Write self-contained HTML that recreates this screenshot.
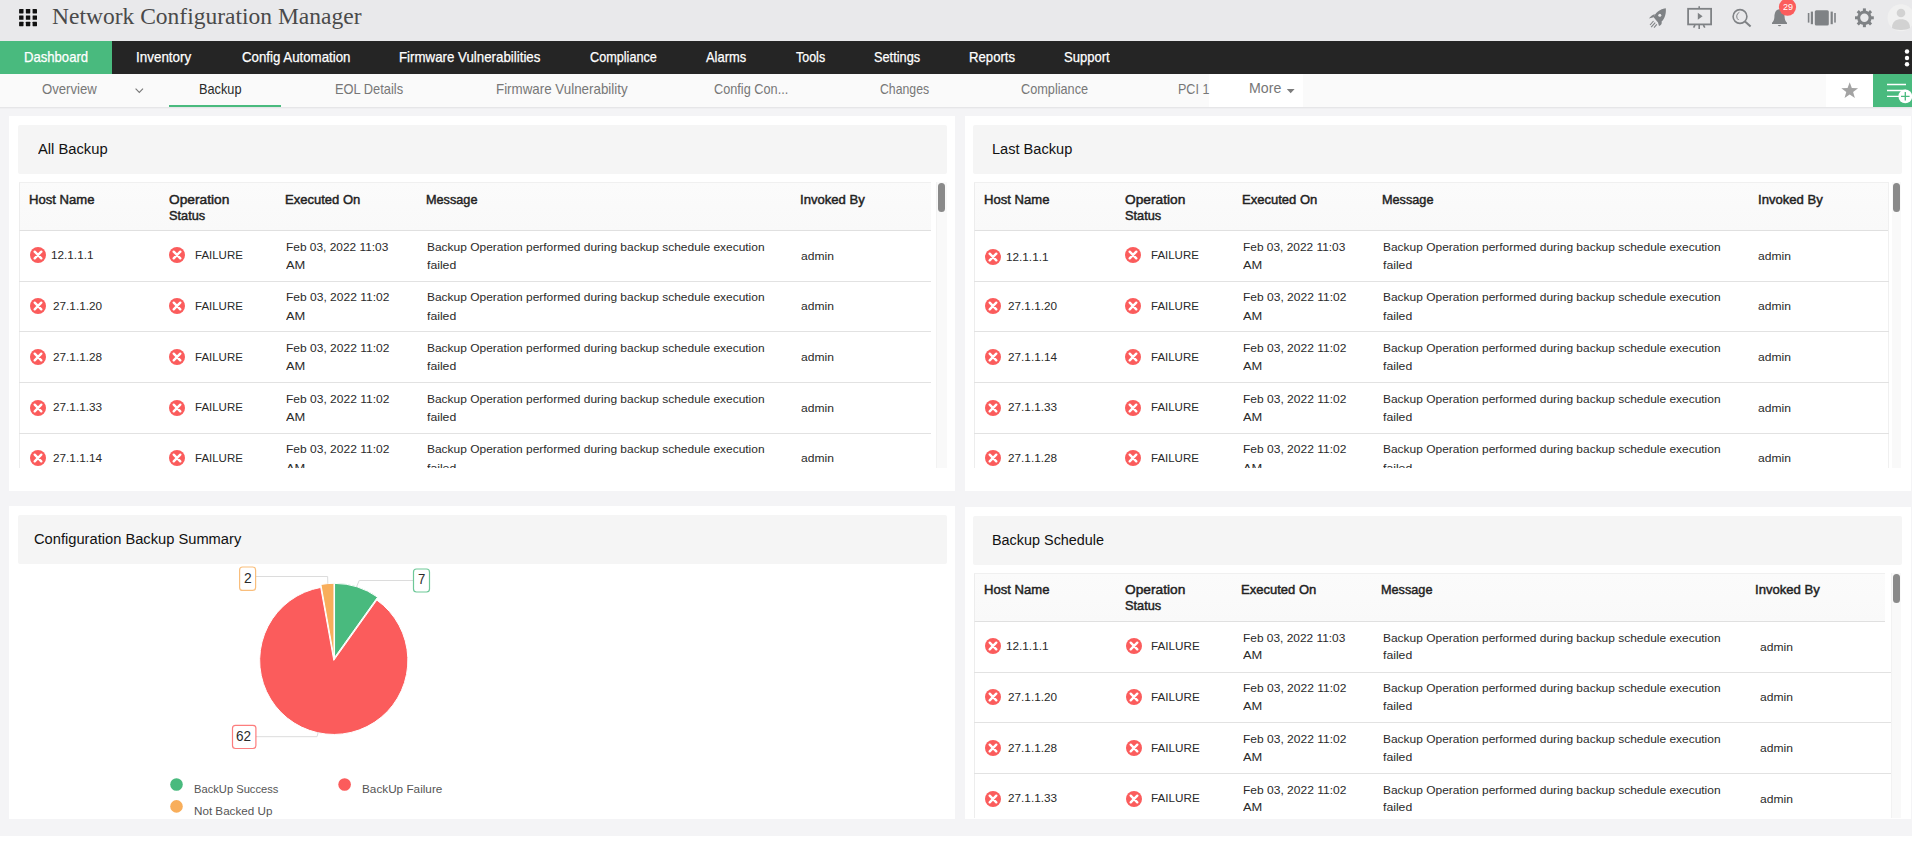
<!DOCTYPE html>
<html><head><meta charset="utf-8"><title>Network Configuration Manager</title>
<style>html,body{margin:0;padding:0;background:#fff;overflow:hidden}body{width:1914px;height:843px;position:relative;font-family:"Liberation Sans",sans-serif}#page{position:absolute;left:0;top:0;width:1912px;height:836px;overflow:hidden}span{display:block}</style></head><body><div id="page">
<div style="position:absolute;left:0px;top:0px;width:1912px;height:41px;background:#e9e9eb;"></div>
<svg style="position:absolute;left:0;top:0" width="60" height="41"><rect x="19.1" y="9.1" width="4.4" height="4.4" rx="0.4" fill="#111"/><rect x="25.85" y="9.1" width="4.4" height="4.4" rx="0.4" fill="#111"/><rect x="32.6" y="9.1" width="4.4" height="4.4" rx="0.4" fill="#111"/><rect x="19.1" y="15.45" width="4.4" height="4.4" rx="0.4" fill="#111"/><rect x="25.85" y="15.45" width="4.4" height="4.4" rx="0.4" fill="#111"/><rect x="32.6" y="15.45" width="4.4" height="4.4" rx="0.4" fill="#111"/><rect x="19.1" y="21.8" width="4.4" height="4.4" rx="0.4" fill="#111"/><rect x="25.85" y="21.8" width="4.4" height="4.4" rx="0.4" fill="#111"/><rect x="32.6" y="21.8" width="4.4" height="4.4" rx="0.4" fill="#111"/></svg>
<div style="position:absolute;left:0px;top:41px;width:1912px;height:32.6px;background:#252525;"></div>
<div style="position:absolute;left:0px;top:41px;width:112px;height:32.6px;background:#49ba7e;"></div>
<svg style="position:absolute;left:1900px;top:45px" width="12" height="26"><circle cx="7" cy="6.5" r="2.2" fill="#fff"/><circle cx="7" cy="13" r="2.2" fill="#fff"/><circle cx="7" cy="19.2" r="2.2" fill="#fff"/></svg>
<div style="position:absolute;left:0px;top:73.6px;width:1912px;height:33.4px;background:#fafafa;"></div>
<div style="position:absolute;left:0px;top:107px;width:1912px;height:1px;background:#e6e6e8;"></div>
<div style="position:absolute;left:0px;top:108px;width:1912px;height:1px;background:#efeff1;"></div>
<div style="position:absolute;left:1209px;top:73.6px;width:94px;height:33.4px;background:#fff;"></div>
<div style="position:absolute;left:1826px;top:73.6px;width:47px;height:33.4px;background:#fff;"></div>
<div style="position:absolute;left:1873px;top:73.6px;width:39px;height:33.4px;background:#49ba7e;"></div>
<div style="position:absolute;left:169.3px;top:105px;width:111.6px;height:2px;background:#49ba7e;"></div>
<svg style="position:absolute;left:130px;top:84px" width="20" height="14"><path d="M5.6 4.6 L9.3 8.4 L13 4.6" fill="none" stroke="#777" stroke-width="1.1"/></svg>
<svg style="position:absolute;left:1284px;top:84px" width="16" height="12"><path d="M2.8 4.9 L10.6 4.9 L6.7 9.2Z" fill="#7c7c7c"/></svg>
<svg style="position:absolute;left:1826px;top:74px" width="47" height="33"><polygon points="23.70,8.20 25.82,14.09 32.07,14.28 27.12,18.11 28.87,24.12 23.70,20.60 18.53,24.12 20.28,18.11 15.33,14.28 21.58,14.09" fill="#a3a3a3"/></svg>
<svg style="position:absolute;left:1873px;top:74px" width="39" height="33"><g stroke="#fff" stroke-width="1.3"><path d="M14 10.5H33M14 16.5H33M14 22.4H33"/></g><circle cx="32.3" cy="22.3" r="6.9" fill="#fff"/><path d="M28 22.3H36.6M32.3 18V26.6" stroke="#49ba7e" stroke-width="1.3"/></svg>
<svg style="position:absolute;left:1640px;top:0" width="272" height="41"><g fill="#7f8285"><path d="M25.8 8.2 C19.5 9.6 15.2 13.5 13.6 17.2 L8.9 18.6 C10.5 16 13 14.3 15.8 14.2 C18.5 11 22 8.8 25.8 8.2Z"/><path d="M25.8 8.2 C26.3 13.5 24.8 18.5 21.6 21.6 C22.2 23.6 21.2 25.4 19 26 L18 22.5 L13.6 17.2 C15.6 12.6 20 9 25.8 8.2Z"/></g><circle cx="19.8" cy="15.2" r="1.5" fill="#e9e9eb"/><g stroke="#7f8285" stroke-width="1.1"><path d="M13.5 21L10 25M15.2 22.6L11.2 27.2M16.8 24.4L14 27.6"/></g><rect x="48.1" y="8.8" width="23" height="15.6" fill="none" stroke="#7f8285" stroke-width="1.8"/><path d="M57.8 12.8 L62.6 16.3 L57.8 19.8Z" fill="#7f8285"/><path d="M59.2 6.2V8.8M59.2 25V29M53.6 27.6L55 25M64.8 27.6L63.4 25" stroke="#7f8285" stroke-width="1.6"/><circle cx="100" cy="16.5" r="6.9" fill="none" stroke="#7f8285" stroke-width="1.6"/><path d="M99.4 12.3 A4.4 4.4 0 0 0 98.6 20" fill="none" stroke="#7f8285" stroke-width="1"/><path d="M105 21.5L110.6 26.6" stroke="#7f8285" stroke-width="2"/><path d="M139.5 9.2 C135.5 9.6 134.6 13 134.4 17 C134.2 20 133.4 21.6 132 22.8 L132 24 L147 24 L147 22.8 C145.6 21.6 144.8 20 144.6 17 C144.4 13 143.5 9.6 139.5 9.2Z" fill="#7f8285"/><path d="M137.8 25 A1.8 1.8 0 0 0 141.2 25Z" fill="#7f8285"/><circle cx="147.5" cy="7.1" r="8.6" fill="#fb5c5c"/><rect x="174.8" y="10.2" width="14" height="15.4" rx="1.5" fill="#7f8285"/><rect x="170.8" y="11.6" width="2.2" height="12.6" fill="#7f8285"/><rect x="167.8" y="13" width="1.6" height="9.6" fill="#7f8285"/><rect x="190.6" y="11.6" width="2.2" height="12.6" fill="#7f8285"/><rect x="194.2" y="13" width="1.6" height="9.6" fill="#7f8285"/><rect x="222.9" y="8.4" width="3" height="4" fill="#7f8285" transform="rotate(0 224.4 17.8)"/><rect x="222.9" y="8.4" width="3" height="4" fill="#7f8285" transform="rotate(45 224.4 17.8)"/><rect x="222.9" y="8.4" width="3" height="4" fill="#7f8285" transform="rotate(90 224.4 17.8)"/><rect x="222.9" y="8.4" width="3" height="4" fill="#7f8285" transform="rotate(135 224.4 17.8)"/><rect x="222.9" y="8.4" width="3" height="4" fill="#7f8285" transform="rotate(180 224.4 17.8)"/><rect x="222.9" y="8.4" width="3" height="4" fill="#7f8285" transform="rotate(225 224.4 17.8)"/><rect x="222.9" y="8.4" width="3" height="4" fill="#7f8285" transform="rotate(270 224.4 17.8)"/><rect x="222.9" y="8.4" width="3" height="4" fill="#7f8285" transform="rotate(315 224.4 17.8)"/><circle cx="224.4" cy="17.8" r="5.7" fill="none" stroke="#7f8285" stroke-width="3"/><circle cx="261" cy="17.7" r="13.5" fill="#f0f0f0"/><circle cx="261" cy="13" r="4.3" fill="#d2d2d2"/><path d="M252 28 C252 21.5 256 19.2 261 19.2 C266 19.2 270 21.5 270 28 C267 30.6 255 30.6 252 28Z" fill="#d2d2d2"/></svg>
<div style="position:absolute;left:0px;top:109px;width:1912px;height:727px;background:#f4f4f6;"></div>
<div style="position:absolute;left:9px;top:116px;width:946px;height:375px;background:#fff;"></div>
<div style="position:absolute;left:18.2px;top:125.3px;width:928.6px;height:48.3px;background:#f5f5f5;border-radius:2px;"></div>
<div style="position:absolute;left:19.2px;top:182.2px;width:911.8px;height:48.8px;background:#fafafa;border-top:1px solid #f0f0f0;border-left:1px solid #ededed;box-sizing:border-box;border-bottom:1px solid #e0e0e0;background:linear-gradient(#fbfbfb,#f9f9f9);"></div>
<div style="position:absolute;left:19.2px;top:231px;width:1px;height:237px;background:#ededed;"></div>
<div style="position:absolute;left:19.2px;top:281px;width:911.8px;height:1px;background:#e2e2e2;"></div>
<svg style="position:absolute;left:28.6px;top:246.45px" width="18" height="18"><circle cx="9" cy="9" r="8" fill="#fb5c5c"/><path d="M5.7 5.7L12.3 12.3M12.3 5.7L5.7 12.3" stroke="#fff" stroke-width="2.4" stroke-linecap="round"/></svg>
<svg style="position:absolute;left:168px;top:246.45px" width="18" height="18"><circle cx="9" cy="9" r="8" fill="#fb5c5c"/><path d="M5.7 5.7L12.3 12.3M12.3 5.7L5.7 12.3" stroke="#fff" stroke-width="2.4" stroke-linecap="round"/></svg>
<div style="position:absolute;left:19.2px;top:331px;width:911.8px;height:1px;background:#e2e2e2;"></div>
<svg style="position:absolute;left:28.6px;top:297.17px" width="18" height="18"><circle cx="9" cy="9" r="8" fill="#fb5c5c"/><path d="M5.7 5.7L12.3 12.3M12.3 5.7L5.7 12.3" stroke="#fff" stroke-width="2.4" stroke-linecap="round"/></svg>
<svg style="position:absolute;left:168px;top:297.17px" width="18" height="18"><circle cx="9" cy="9" r="8" fill="#fb5c5c"/><path d="M5.7 5.7L12.3 12.3M12.3 5.7L5.7 12.3" stroke="#fff" stroke-width="2.4" stroke-linecap="round"/></svg>
<div style="position:absolute;left:19.2px;top:382px;width:911.8px;height:1px;background:#e2e2e2;"></div>
<svg style="position:absolute;left:28.6px;top:347.89px" width="18" height="18"><circle cx="9" cy="9" r="8" fill="#fb5c5c"/><path d="M5.7 5.7L12.3 12.3M12.3 5.7L5.7 12.3" stroke="#fff" stroke-width="2.4" stroke-linecap="round"/></svg>
<svg style="position:absolute;left:168px;top:347.89px" width="18" height="18"><circle cx="9" cy="9" r="8" fill="#fb5c5c"/><path d="M5.7 5.7L12.3 12.3M12.3 5.7L5.7 12.3" stroke="#fff" stroke-width="2.4" stroke-linecap="round"/></svg>
<div style="position:absolute;left:19.2px;top:433px;width:911.8px;height:1px;background:#e2e2e2;"></div>
<svg style="position:absolute;left:28.6px;top:398.61px" width="18" height="18"><circle cx="9" cy="9" r="8" fill="#fb5c5c"/><path d="M5.7 5.7L12.3 12.3M12.3 5.7L5.7 12.3" stroke="#fff" stroke-width="2.4" stroke-linecap="round"/></svg>
<svg style="position:absolute;left:168px;top:398.61px" width="18" height="18"><circle cx="9" cy="9" r="8" fill="#fb5c5c"/><path d="M5.7 5.7L12.3 12.3M12.3 5.7L5.7 12.3" stroke="#fff" stroke-width="2.4" stroke-linecap="round"/></svg>
<svg style="position:absolute;left:28.6px;top:449.33px" width="18" height="18"><circle cx="9" cy="9" r="8" fill="#fb5c5c"/><path d="M5.7 5.7L12.3 12.3M12.3 5.7L5.7 12.3" stroke="#fff" stroke-width="2.4" stroke-linecap="round"/></svg>
<svg style="position:absolute;left:168px;top:449.33px" width="18" height="18"><circle cx="9" cy="9" r="8" fill="#fb5c5c"/><path d="M5.7 5.7L12.3 12.3M12.3 5.7L5.7 12.3" stroke="#fff" stroke-width="2.4" stroke-linecap="round"/></svg>
<div style="position:absolute;left:936px;top:182px;width:10.5px;height:286px;background:#f9f9f9;border-left:1px solid #f2f2f2;box-sizing:border-box;"></div>
<div style="position:absolute;left:938px;top:182.7px;width:7.2px;height:29px;background:#8a8a8a;border-radius:4px;"></div>
<div style="position:absolute;left:964.5px;top:116px;width:946.5px;height:375px;background:#fff;"></div>
<div style="position:absolute;left:973.2px;top:125.3px;width:928.6px;height:48.3px;background:#f5f5f5;border-radius:2px;"></div>
<div style="position:absolute;left:974.2px;top:182.2px;width:914.6px;height:48.8px;background:#fafafa;border-top:1px solid #f0f0f0;border-left:1px solid #ededed;box-sizing:border-box;border-bottom:1px solid #e0e0e0;background:linear-gradient(#fbfbfb,#f9f9f9);"></div>
<div style="position:absolute;left:974.2px;top:231px;width:1px;height:237px;background:#ededed;"></div>
<div style="position:absolute;left:1887.8px;top:182.2px;width:1px;height:285.8px;background:#f0f0f0;"></div>
<div style="position:absolute;left:974.2px;top:281px;width:914.6px;height:1px;background:#e2e2e2;"></div>
<svg style="position:absolute;left:983.7px;top:248.05px" width="18" height="18"><circle cx="9" cy="9" r="8" fill="#fb5c5c"/><path d="M5.7 5.7L12.3 12.3M12.3 5.7L5.7 12.3" stroke="#fff" stroke-width="2.4" stroke-linecap="round"/></svg>
<svg style="position:absolute;left:1124px;top:246.45px" width="18" height="18"><circle cx="9" cy="9" r="8" fill="#fb5c5c"/><path d="M5.7 5.7L12.3 12.3M12.3 5.7L5.7 12.3" stroke="#fff" stroke-width="2.4" stroke-linecap="round"/></svg>
<div style="position:absolute;left:974.2px;top:331px;width:914.6px;height:1px;background:#e2e2e2;"></div>
<svg style="position:absolute;left:983.7px;top:297.17px" width="18" height="18"><circle cx="9" cy="9" r="8" fill="#fb5c5c"/><path d="M5.7 5.7L12.3 12.3M12.3 5.7L5.7 12.3" stroke="#fff" stroke-width="2.4" stroke-linecap="round"/></svg>
<svg style="position:absolute;left:1124px;top:297.17px" width="18" height="18"><circle cx="9" cy="9" r="8" fill="#fb5c5c"/><path d="M5.7 5.7L12.3 12.3M12.3 5.7L5.7 12.3" stroke="#fff" stroke-width="2.4" stroke-linecap="round"/></svg>
<div style="position:absolute;left:974.2px;top:382px;width:914.6px;height:1px;background:#e2e2e2;"></div>
<svg style="position:absolute;left:983.7px;top:347.89px" width="18" height="18"><circle cx="9" cy="9" r="8" fill="#fb5c5c"/><path d="M5.7 5.7L12.3 12.3M12.3 5.7L5.7 12.3" stroke="#fff" stroke-width="2.4" stroke-linecap="round"/></svg>
<svg style="position:absolute;left:1124px;top:347.89px" width="18" height="18"><circle cx="9" cy="9" r="8" fill="#fb5c5c"/><path d="M5.7 5.7L12.3 12.3M12.3 5.7L5.7 12.3" stroke="#fff" stroke-width="2.4" stroke-linecap="round"/></svg>
<div style="position:absolute;left:974.2px;top:433px;width:914.6px;height:1px;background:#e2e2e2;"></div>
<svg style="position:absolute;left:983.7px;top:398.61px" width="18" height="18"><circle cx="9" cy="9" r="8" fill="#fb5c5c"/><path d="M5.7 5.7L12.3 12.3M12.3 5.7L5.7 12.3" stroke="#fff" stroke-width="2.4" stroke-linecap="round"/></svg>
<svg style="position:absolute;left:1124px;top:398.61px" width="18" height="18"><circle cx="9" cy="9" r="8" fill="#fb5c5c"/><path d="M5.7 5.7L12.3 12.3M12.3 5.7L5.7 12.3" stroke="#fff" stroke-width="2.4" stroke-linecap="round"/></svg>
<svg style="position:absolute;left:983.7px;top:449.33px" width="18" height="18"><circle cx="9" cy="9" r="8" fill="#fb5c5c"/><path d="M5.7 5.7L12.3 12.3M12.3 5.7L5.7 12.3" stroke="#fff" stroke-width="2.4" stroke-linecap="round"/></svg>
<svg style="position:absolute;left:1124px;top:449.33px" width="18" height="18"><circle cx="9" cy="9" r="8" fill="#fb5c5c"/><path d="M5.7 5.7L12.3 12.3M12.3 5.7L5.7 12.3" stroke="#fff" stroke-width="2.4" stroke-linecap="round"/></svg>
<div style="position:absolute;left:1892px;top:182px;width:9.4px;height:286px;background:#f9f9f9;"></div>
<div style="position:absolute;left:1893px;top:182.7px;width:7.2px;height:29px;background:#8a8a8a;border-radius:4px;"></div>
<div style="position:absolute;left:9px;top:506px;width:946px;height:312.5px;background:#fff;"></div>
<div style="position:absolute;left:18.2px;top:515.3px;width:928.6px;height:48.3px;background:#f5f5f5;border-radius:2px;"></div>
<div style="position:absolute;left:964.5px;top:507px;width:946.5px;height:311.5px;background:#fff;"></div>
<div style="position:absolute;left:973.2px;top:516.3px;width:928.6px;height:48.3px;background:#f5f5f5;border-radius:2px;"></div>
<div style="position:absolute;left:974.2px;top:573.3px;width:911px;height:48.7px;background:#fafafa;border-top:1px solid #f0f0f0;border-left:1px solid #ededed;box-sizing:border-box;border-bottom:1px solid #e0e0e0;background:linear-gradient(#fbfbfb,#f9f9f9);"></div>
<div style="position:absolute;left:974.2px;top:622px;width:1px;height:196.4px;background:#ededed;"></div>
<div style="position:absolute;left:974.2px;top:672px;width:917px;height:1px;background:#e2e2e2;"></div>
<svg style="position:absolute;left:983.7px;top:637.45px" width="18" height="18"><circle cx="9" cy="9" r="8" fill="#fb5c5c"/><path d="M5.7 5.7L12.3 12.3M12.3 5.7L5.7 12.3" stroke="#fff" stroke-width="2.4" stroke-linecap="round"/></svg>
<svg style="position:absolute;left:1124.6px;top:637.45px" width="18" height="18"><circle cx="9" cy="9" r="8" fill="#fb5c5c"/><path d="M5.7 5.7L12.3 12.3M12.3 5.7L5.7 12.3" stroke="#fff" stroke-width="2.4" stroke-linecap="round"/></svg>
<div style="position:absolute;left:974.2px;top:722px;width:917px;height:1px;background:#e2e2e2;"></div>
<svg style="position:absolute;left:983.7px;top:688.17px" width="18" height="18"><circle cx="9" cy="9" r="8" fill="#fb5c5c"/><path d="M5.7 5.7L12.3 12.3M12.3 5.7L5.7 12.3" stroke="#fff" stroke-width="2.4" stroke-linecap="round"/></svg>
<svg style="position:absolute;left:1124.6px;top:688.17px" width="18" height="18"><circle cx="9" cy="9" r="8" fill="#fb5c5c"/><path d="M5.7 5.7L12.3 12.3M12.3 5.7L5.7 12.3" stroke="#fff" stroke-width="2.4" stroke-linecap="round"/></svg>
<div style="position:absolute;left:974.2px;top:773px;width:917px;height:1px;background:#e2e2e2;"></div>
<svg style="position:absolute;left:983.7px;top:738.89px" width="18" height="18"><circle cx="9" cy="9" r="8" fill="#fb5c5c"/><path d="M5.7 5.7L12.3 12.3M12.3 5.7L5.7 12.3" stroke="#fff" stroke-width="2.4" stroke-linecap="round"/></svg>
<svg style="position:absolute;left:1124.6px;top:738.89px" width="18" height="18"><circle cx="9" cy="9" r="8" fill="#fb5c5c"/><path d="M5.7 5.7L12.3 12.3M12.3 5.7L5.7 12.3" stroke="#fff" stroke-width="2.4" stroke-linecap="round"/></svg>
<svg style="position:absolute;left:983.7px;top:789.61px" width="18" height="18"><circle cx="9" cy="9" r="8" fill="#fb5c5c"/><path d="M5.7 5.7L12.3 12.3M12.3 5.7L5.7 12.3" stroke="#fff" stroke-width="2.4" stroke-linecap="round"/></svg>
<svg style="position:absolute;left:1124.6px;top:789.61px" width="18" height="18"><circle cx="9" cy="9" r="8" fill="#fb5c5c"/><path d="M5.7 5.7L12.3 12.3M12.3 5.7L5.7 12.3" stroke="#fff" stroke-width="2.4" stroke-linecap="round"/></svg>
<div style="position:absolute;left:1891px;top:573.3px;width:10.2px;height:245.2px;background:#f9f9f9;border-left:1px solid #f2f2f2;box-sizing:border-box;"></div>
<div style="position:absolute;left:1893px;top:573.8px;width:7px;height:29px;background:#8a8a8a;border-radius:4px;"></div>
<svg style="position:absolute;left:0;top:0" width="960" height="843"><path transform="translate(-0.33 1.46)" d="M334.10 658.90 L377.12 598.57 A74.1 74.1 0 1 1 321.05 585.96 Z" fill="#fb5c5c" stroke="#fff" stroke-width="1" stroke-linejoin="round"/><path transform="translate(0.46 -1.43)" d="M334.10 658.90 L334.10 584.80 A74.1 74.1 0 0 1 377.12 598.57 Z" fill="#49ba7e" stroke="#fff" stroke-width="1" stroke-linejoin="round"/><path transform="translate(-0.13 -1.49)" d="M334.10 658.90 L321.05 585.96 A74.1 74.1 0 0 1 334.10 584.80 Z" fill="#f8ae5b" stroke="#fff" stroke-width="1" stroke-linejoin="round"/><path d="M413 580.5 L359.2 580.5 L356.5 587" fill="none" stroke="#dcdcdc" stroke-width="1"/><path d="M256 576.5 L327.6 576.5 L327.8 583.6" fill="none" stroke="#dcdcdc" stroke-width="1"/><path d="M256 736.7 L317 736.7 L318.3 732" fill="none" stroke="#dcdcdc" stroke-width="1"/><rect x="413.5" y="569.0" width="16" height="23" rx="3" fill="#fff" stroke="#49ba7e" stroke-width="1.2" stroke-opacity=".8"/><rect x="239.6" y="567" width="16" height="23.4" rx="3" fill="#fff" stroke="#f8ae5b" stroke-width="1.2" stroke-opacity=".8"/><rect x="232.5" y="725.3" width="23.4" height="23.2" rx="3" fill="#fff" stroke="#fb5c5c" stroke-width="1.2" stroke-opacity=".8"/><circle cx="176.5" cy="784.5" r="6.3" fill="#49ba7e"/><circle cx="344.6" cy="784.5" r="6.3" fill="#fb5c5c"/><circle cx="176.5" cy="806.4" r="6.3" fill="#f8ae5b"/></svg>
<span style="position:absolute;left:52.20px;top:6.51px;line-height:20px;white-space:pre;font-family:'Liberation Serif', serif;font-size:22.2px;color:#4a4a4a;transform-origin:0 0;transform:scaleX(1.0596);">Network Configuration Manager</span>
<span style="position:absolute;left:24.20px;top:47.38px;line-height:20px;white-space:pre;font-family:'Liberation Sans', sans-serif;font-size:14.2px;color:#fff;transform-origin:0 0;transform:scaleX(0.9235);-webkit-text-stroke:0.25px #fff;">Dashboard</span>
<span style="position:absolute;left:135.98px;top:47.38px;line-height:20px;white-space:pre;font-family:'Liberation Sans', sans-serif;font-size:14.2px;color:#fff;transform-origin:0 0;transform:scaleX(0.9466);-webkit-text-stroke:0.25px #fff;">Inventory</span>
<span style="position:absolute;left:241.72px;top:47.38px;line-height:20px;white-space:pre;font-family:'Liberation Sans', sans-serif;font-size:14.2px;color:#fff;transform-origin:0 0;transform:scaleX(0.9354);-webkit-text-stroke:0.25px #fff;">Config Automation</span>
<span style="position:absolute;left:398.69px;top:47.38px;line-height:20px;white-space:pre;font-family:'Liberation Sans', sans-serif;font-size:14.2px;color:#fff;transform-origin:0 0;transform:scaleX(0.9372);-webkit-text-stroke:0.25px #fff;">Firmware Vulnerabilities</span>
<span style="position:absolute;left:589.62px;top:47.38px;line-height:20px;white-space:pre;font-family:'Liberation Sans', sans-serif;font-size:14.2px;color:#fff;transform-origin:0 0;transform:scaleX(0.8924);-webkit-text-stroke:0.25px #fff;">Compliance</span>
<span style="position:absolute;left:706.23px;top:47.38px;line-height:20px;white-space:pre;font-family:'Liberation Sans', sans-serif;font-size:14.2px;color:#fff;transform-origin:0 0;transform:scaleX(0.9092);-webkit-text-stroke:0.25px #fff;">Alarms</span>
<span style="position:absolute;left:795.83px;top:47.38px;line-height:20px;white-space:pre;font-family:'Liberation Sans', sans-serif;font-size:14.2px;color:#fff;transform-origin:0 0;transform:scaleX(0.8796);-webkit-text-stroke:0.25px #fff;">Tools</span>
<span style="position:absolute;left:874.43px;top:47.38px;line-height:20px;white-space:pre;font-family:'Liberation Sans', sans-serif;font-size:14.2px;color:#fff;transform-origin:0 0;transform:scaleX(0.8999);-webkit-text-stroke:0.25px #fff;">Settings</span>
<span style="position:absolute;left:969.20px;top:47.38px;line-height:20px;white-space:pre;font-family:'Liberation Sans', sans-serif;font-size:14.2px;color:#fff;transform-origin:0 0;transform:scaleX(0.9273);-webkit-text-stroke:0.25px #fff;">Reports</span>
<span style="position:absolute;left:1064.42px;top:47.38px;line-height:20px;white-space:pre;font-family:'Liberation Sans', sans-serif;font-size:14.2px;color:#fff;transform-origin:0 0;transform:scaleX(0.9176);-webkit-text-stroke:0.25px #fff;">Support</span>
<span style="position:absolute;left:42.30px;top:79.28px;line-height:20px;white-space:pre;font-family:'Liberation Sans', sans-serif;font-size:14.2px;color:#777;transform-origin:0 0;transform:scaleX(0.9268);">Overview</span>
<span style="position:absolute;left:198.70px;top:79.28px;line-height:20px;white-space:pre;font-family:'Liberation Sans', sans-serif;font-size:14.2px;color:#2a2a2a;transform-origin:0 0;transform:scaleX(0.8981);">Backup</span>
<span style="position:absolute;left:335.29px;top:79.28px;line-height:20px;white-space:pre;font-family:'Liberation Sans', sans-serif;font-size:14.2px;color:#777;transform-origin:0 0;transform:scaleX(0.9061);">EOL Details</span>
<span style="position:absolute;left:495.56px;top:79.28px;line-height:20px;white-space:pre;font-family:'Liberation Sans', sans-serif;font-size:14.2px;color:#777;transform-origin:0 0;transform:scaleX(0.9412);">Firmware Vulnerability</span>
<span style="position:absolute;left:714.40px;top:79.28px;line-height:20px;white-space:pre;font-family:'Liberation Sans', sans-serif;font-size:14.2px;color:#777;transform-origin:0 0;transform:scaleX(0.8966);">Config Con...</span>
<span style="position:absolute;left:880.00px;top:79.28px;line-height:20px;white-space:pre;font-family:'Liberation Sans', sans-serif;font-size:14.2px;color:#777;transform-origin:0 0;transform:scaleX(0.8642);">Changes</span>
<span style="position:absolute;left:1020.80px;top:79.28px;line-height:20px;white-space:pre;font-family:'Liberation Sans', sans-serif;font-size:14.2px;color:#777;transform-origin:0 0;transform:scaleX(0.8957);">Compliance</span>
<span style="position:absolute;left:1178.12px;top:79.28px;line-height:20px;white-space:pre;font-family:'Liberation Sans', sans-serif;font-size:14.2px;color:#777;transform-origin:0 0;transform:scaleX(0.8846);">PCI 1</span>
<span style="position:absolute;left:1248.60px;top:78.28px;line-height:20px;white-space:pre;font-family:'Liberation Sans', sans-serif;font-size:14.2px;color:#777;transform-origin:0 0;transform:scaleX(0.9989);">More</span>
<span style="position:absolute;left:1782.70px;top:-3.40px;line-height:20px;white-space:pre;font-family:'Liberation Sans', sans-serif;font-size:9.8px;color:#fff;transform-origin:0 0;transform:scaleX(0.9188);">29</span>
<span style="position:absolute;left:38.20px;top:138.66px;line-height:20px;white-space:pre;font-family:'Liberation Sans', sans-serif;font-size:15.4px;color:#111;transform-origin:0 0;transform:scaleX(0.9577);">All Backup</span>
<span style="position:absolute;left:28.93px;top:189.53px;line-height:20px;white-space:pre;font-family:'Liberation Sans', sans-serif;font-size:13.2px;color:#222;transform-origin:0 0;transform:scaleX(0.9927);-webkit-text-stroke:0.45px #222;">Host Name</span>
<span style="position:absolute;left:169.43px;top:189.53px;line-height:20px;white-space:pre;font-family:'Liberation Sans', sans-serif;font-size:13.2px;color:#222;transform-origin:0 0;transform:scaleX(1.0412);-webkit-text-stroke:0.45px #222;">Operation</span>
<span style="position:absolute;left:169.43px;top:205.53px;line-height:20px;white-space:pre;font-family:'Liberation Sans', sans-serif;font-size:13.2px;color:#222;transform-origin:0 0;transform:scaleX(0.9671);-webkit-text-stroke:0.45px #222;">Status</span>
<span style="position:absolute;left:285.44px;top:189.53px;line-height:20px;white-space:pre;font-family:'Liberation Sans', sans-serif;font-size:13.2px;color:#222;transform-origin:0 0;transform:scaleX(0.9872);-webkit-text-stroke:0.45px #222;">Executed On</span>
<span style="position:absolute;left:425.76px;top:189.53px;line-height:20px;white-space:pre;font-family:'Liberation Sans', sans-serif;font-size:13.2px;color:#222;transform-origin:0 0;transform:scaleX(0.9612);-webkit-text-stroke:0.45px #222;">Message</span>
<span style="position:absolute;left:799.73px;top:189.53px;line-height:20px;white-space:pre;font-family:'Liberation Sans', sans-serif;font-size:13.2px;color:#222;transform-origin:0 0;transform:scaleX(0.9923);-webkit-text-stroke:0.45px #222;">Invoked By</span>
<span style="position:absolute;left:992.25px;top:138.66px;line-height:20px;white-space:pre;font-family:'Liberation Sans', sans-serif;font-size:15.4px;color:#111;transform-origin:0 0;transform:scaleX(0.9478);">Last Backup</span>
<span style="position:absolute;left:984.03px;top:189.53px;line-height:20px;white-space:pre;font-family:'Liberation Sans', sans-serif;font-size:13.2px;color:#222;transform-origin:0 0;transform:scaleX(0.9927);-webkit-text-stroke:0.45px #222;">Host Name</span>
<span style="position:absolute;left:1125.42px;top:189.53px;line-height:20px;white-space:pre;font-family:'Liberation Sans', sans-serif;font-size:13.2px;color:#222;transform-origin:0 0;transform:scaleX(1.0412);-webkit-text-stroke:0.45px #222;">Operation</span>
<span style="position:absolute;left:1125.42px;top:205.53px;line-height:20px;white-space:pre;font-family:'Liberation Sans', sans-serif;font-size:13.2px;color:#222;transform-origin:0 0;transform:scaleX(0.9671);-webkit-text-stroke:0.45px #222;">Status</span>
<span style="position:absolute;left:1241.84px;top:189.53px;line-height:20px;white-space:pre;font-family:'Liberation Sans', sans-serif;font-size:13.2px;color:#222;transform-origin:0 0;transform:scaleX(0.9872);-webkit-text-stroke:0.45px #222;">Executed On</span>
<span style="position:absolute;left:1382.46px;top:189.53px;line-height:20px;white-space:pre;font-family:'Liberation Sans', sans-serif;font-size:13.2px;color:#222;transform-origin:0 0;transform:scaleX(0.9612);-webkit-text-stroke:0.45px #222;">Message</span>
<span style="position:absolute;left:1757.73px;top:189.53px;line-height:20px;white-space:pre;font-family:'Liberation Sans', sans-serif;font-size:13.2px;color:#222;transform-origin:0 0;transform:scaleX(0.9923);-webkit-text-stroke:0.45px #222;">Invoked By</span>
<span style="position:absolute;left:33.80px;top:528.66px;line-height:20px;white-space:pre;font-family:'Liberation Sans', sans-serif;font-size:15.4px;color:#111;transform-origin:0 0;transform:scaleX(0.9537);">Configuration Backup Summary</span>
<span style="position:absolute;left:992.26px;top:529.66px;line-height:20px;white-space:pre;font-family:'Liberation Sans', sans-serif;font-size:15.4px;color:#111;transform-origin:0 0;transform:scaleX(0.9355);">Backup Schedule</span>
<span style="position:absolute;left:984.03px;top:579.63px;line-height:20px;white-space:pre;font-family:'Liberation Sans', sans-serif;font-size:13.2px;color:#222;transform-origin:0 0;transform:scaleX(0.9927);-webkit-text-stroke:0.45px #222;">Host Name</span>
<span style="position:absolute;left:1124.72px;top:579.63px;line-height:20px;white-space:pre;font-family:'Liberation Sans', sans-serif;font-size:13.2px;color:#222;transform-origin:0 0;transform:scaleX(1.0412);-webkit-text-stroke:0.45px #222;">Operation</span>
<span style="position:absolute;left:1124.72px;top:595.63px;line-height:20px;white-space:pre;font-family:'Liberation Sans', sans-serif;font-size:13.2px;color:#222;transform-origin:0 0;transform:scaleX(0.9671);-webkit-text-stroke:0.45px #222;">Status</span>
<span style="position:absolute;left:1240.84px;top:579.63px;line-height:20px;white-space:pre;font-family:'Liberation Sans', sans-serif;font-size:13.2px;color:#222;transform-origin:0 0;transform:scaleX(0.9872);-webkit-text-stroke:0.45px #222;">Executed On</span>
<span style="position:absolute;left:1380.86px;top:579.63px;line-height:20px;white-space:pre;font-family:'Liberation Sans', sans-serif;font-size:13.2px;color:#222;transform-origin:0 0;transform:scaleX(0.9612);-webkit-text-stroke:0.45px #222;">Message</span>
<span style="position:absolute;left:1754.93px;top:579.63px;line-height:20px;white-space:pre;font-family:'Liberation Sans', sans-serif;font-size:13.2px;color:#222;transform-origin:0 0;transform:scaleX(0.9923);-webkit-text-stroke:0.45px #222;">Invoked By</span>
<span style="position:absolute;left:417.80px;top:568.74px;line-height:20px;white-space:pre;font-family:'Liberation Sans', sans-serif;font-size:14.6px;color:#2a2a2a;transform-origin:0 0;transform:scaleX(0.9000);">7</span>
<span style="position:absolute;left:243.80px;top:568.14px;line-height:20px;white-space:pre;font-family:'Liberation Sans', sans-serif;font-size:14.6px;color:#2a2a2a;transform-origin:0 0;transform:scaleX(0.9500);">2</span>
<span style="position:absolute;left:235.80px;top:725.94px;line-height:20px;white-space:pre;font-family:'Liberation Sans', sans-serif;font-size:14.6px;color:#2a2a2a;transform-origin:0 0;transform:scaleX(0.9307);">62</span>
<div style="position:absolute;left:10px;top:230px;width:930px;height:238px;overflow:hidden">
<span style="position:absolute;left:41.00px;top:15.11px;line-height:20px;white-space:pre;font-family:'Liberation Sans', sans-serif;font-size:11.8px;color:#2a2a2a;transform-origin:0 0;transform:scaleX(0.9958);">12.1.1.1</span>
<span style="position:absolute;left:185.20px;top:15.18px;line-height:20px;white-space:pre;font-family:'Liberation Sans', sans-serif;font-size:11.6px;color:#2a2a2a;transform-origin:0 0;transform:scaleX(0.9899);">FAILURE</span>
<span style="position:absolute;left:276.20px;top:6.91px;line-height:20px;white-space:pre;font-family:'Liberation Sans', sans-serif;font-size:11.8px;color:#2a2a2a;transform-origin:0 0;transform:scaleX(1.0090);">Feb 03, 2022 11:03</span>
<span style="position:absolute;left:276.20px;top:24.91px;line-height:20px;white-space:pre;font-family:'Liberation Sans', sans-serif;font-size:11.8px;color:#2a2a2a;transform-origin:0 0;transform:scaleX(1.0908);">AM</span>
<span style="position:absolute;left:416.50px;top:6.91px;line-height:20px;white-space:pre;font-family:'Liberation Sans', sans-serif;font-size:11.8px;color:#2a2a2a;transform-origin:0 0;transform:scaleX(1.0133);">Backup Operation performed during backup schedule execution</span>
<span style="position:absolute;left:416.50px;top:24.91px;line-height:20px;white-space:pre;font-family:'Liberation Sans', sans-serif;font-size:11.8px;color:#2a2a2a;transform-origin:0 0;transform:scaleX(1.0347);">failed</span>
<span style="position:absolute;left:790.50px;top:16.21px;line-height:20px;white-space:pre;font-family:'Liberation Sans', sans-serif;font-size:11.8px;color:#2a2a2a;transform-origin:0 0;transform:scaleX(1.0231);">admin</span>
<span style="position:absolute;left:42.90px;top:65.83px;line-height:20px;white-space:pre;font-family:'Liberation Sans', sans-serif;font-size:11.8px;color:#2a2a2a;transform-origin:0 0;transform:scaleX(0.9972);">27.1.1.20</span>
<span style="position:absolute;left:185.20px;top:65.90px;line-height:20px;white-space:pre;font-family:'Liberation Sans', sans-serif;font-size:11.6px;color:#2a2a2a;transform-origin:0 0;transform:scaleX(0.9899);">FAILURE</span>
<span style="position:absolute;left:276.20px;top:56.91px;line-height:20px;white-space:pre;font-family:'Liberation Sans', sans-serif;font-size:11.8px;color:#2a2a2a;transform-origin:0 0;transform:scaleX(1.0190);">Feb 03, 2022 11:02</span>
<span style="position:absolute;left:276.20px;top:75.91px;line-height:20px;white-space:pre;font-family:'Liberation Sans', sans-serif;font-size:11.8px;color:#2a2a2a;transform-origin:0 0;transform:scaleX(1.0908);">AM</span>
<span style="position:absolute;left:416.50px;top:56.91px;line-height:20px;white-space:pre;font-family:'Liberation Sans', sans-serif;font-size:11.8px;color:#2a2a2a;transform-origin:0 0;transform:scaleX(1.0133);">Backup Operation performed during backup schedule execution</span>
<span style="position:absolute;left:416.50px;top:75.91px;line-height:20px;white-space:pre;font-family:'Liberation Sans', sans-serif;font-size:11.8px;color:#2a2a2a;transform-origin:0 0;transform:scaleX(1.0347);">failed</span>
<span style="position:absolute;left:790.50px;top:66.21px;line-height:20px;white-space:pre;font-family:'Liberation Sans', sans-serif;font-size:11.8px;color:#2a2a2a;transform-origin:0 0;transform:scaleX(1.0231);">admin</span>
<span style="position:absolute;left:42.90px;top:116.55px;line-height:20px;white-space:pre;font-family:'Liberation Sans', sans-serif;font-size:11.8px;color:#2a2a2a;transform-origin:0 0;transform:scaleX(0.9972);">27.1.1.28</span>
<span style="position:absolute;left:185.20px;top:116.62px;line-height:20px;white-space:pre;font-family:'Liberation Sans', sans-serif;font-size:11.6px;color:#2a2a2a;transform-origin:0 0;transform:scaleX(0.9899);">FAILURE</span>
<span style="position:absolute;left:276.20px;top:107.91px;line-height:20px;white-space:pre;font-family:'Liberation Sans', sans-serif;font-size:11.8px;color:#2a2a2a;transform-origin:0 0;transform:scaleX(1.0190);">Feb 03, 2022 11:02</span>
<span style="position:absolute;left:276.20px;top:125.91px;line-height:20px;white-space:pre;font-family:'Liberation Sans', sans-serif;font-size:11.8px;color:#2a2a2a;transform-origin:0 0;transform:scaleX(1.0908);">AM</span>
<span style="position:absolute;left:416.50px;top:107.91px;line-height:20px;white-space:pre;font-family:'Liberation Sans', sans-serif;font-size:11.8px;color:#2a2a2a;transform-origin:0 0;transform:scaleX(1.0133);">Backup Operation performed during backup schedule execution</span>
<span style="position:absolute;left:416.50px;top:125.91px;line-height:20px;white-space:pre;font-family:'Liberation Sans', sans-serif;font-size:11.8px;color:#2a2a2a;transform-origin:0 0;transform:scaleX(1.0347);">failed</span>
<span style="position:absolute;left:790.50px;top:117.21px;line-height:20px;white-space:pre;font-family:'Liberation Sans', sans-serif;font-size:11.8px;color:#2a2a2a;transform-origin:0 0;transform:scaleX(1.0231);">admin</span>
<span style="position:absolute;left:42.90px;top:167.27px;line-height:20px;white-space:pre;font-family:'Liberation Sans', sans-serif;font-size:11.8px;color:#2a2a2a;transform-origin:0 0;transform:scaleX(0.9972);">27.1.1.33</span>
<span style="position:absolute;left:185.20px;top:167.34px;line-height:20px;white-space:pre;font-family:'Liberation Sans', sans-serif;font-size:11.6px;color:#2a2a2a;transform-origin:0 0;transform:scaleX(0.9899);">FAILURE</span>
<span style="position:absolute;left:276.20px;top:158.91px;line-height:20px;white-space:pre;font-family:'Liberation Sans', sans-serif;font-size:11.8px;color:#2a2a2a;transform-origin:0 0;transform:scaleX(1.0190);">Feb 03, 2022 11:02</span>
<span style="position:absolute;left:276.20px;top:176.91px;line-height:20px;white-space:pre;font-family:'Liberation Sans', sans-serif;font-size:11.8px;color:#2a2a2a;transform-origin:0 0;transform:scaleX(1.0908);">AM</span>
<span style="position:absolute;left:416.50px;top:158.91px;line-height:20px;white-space:pre;font-family:'Liberation Sans', sans-serif;font-size:11.8px;color:#2a2a2a;transform-origin:0 0;transform:scaleX(1.0133);">Backup Operation performed during backup schedule execution</span>
<span style="position:absolute;left:416.50px;top:176.91px;line-height:20px;white-space:pre;font-family:'Liberation Sans', sans-serif;font-size:11.8px;color:#2a2a2a;transform-origin:0 0;transform:scaleX(1.0347);">failed</span>
<span style="position:absolute;left:790.50px;top:168.21px;line-height:20px;white-space:pre;font-family:'Liberation Sans', sans-serif;font-size:11.8px;color:#2a2a2a;transform-origin:0 0;transform:scaleX(1.0231);">admin</span>
<span style="position:absolute;left:42.90px;top:217.99px;line-height:20px;white-space:pre;font-family:'Liberation Sans', sans-serif;font-size:11.8px;color:#2a2a2a;transform-origin:0 0;transform:scaleX(0.9972);">27.1.1.14</span>
<span style="position:absolute;left:185.20px;top:218.06px;line-height:20px;white-space:pre;font-family:'Liberation Sans', sans-serif;font-size:11.6px;color:#2a2a2a;transform-origin:0 0;transform:scaleX(0.9899);">FAILURE</span>
<span style="position:absolute;left:276.20px;top:208.91px;line-height:20px;white-space:pre;font-family:'Liberation Sans', sans-serif;font-size:11.8px;color:#2a2a2a;transform-origin:0 0;transform:scaleX(1.0190);">Feb 03, 2022 11:02</span>
<span style="position:absolute;left:276.20px;top:227.91px;line-height:20px;white-space:pre;font-family:'Liberation Sans', sans-serif;font-size:11.8px;color:#2a2a2a;transform-origin:0 0;transform:scaleX(1.0908);">AM</span>
<span style="position:absolute;left:416.50px;top:208.91px;line-height:20px;white-space:pre;font-family:'Liberation Sans', sans-serif;font-size:11.8px;color:#2a2a2a;transform-origin:0 0;transform:scaleX(1.0133);">Backup Operation performed during backup schedule execution</span>
<span style="position:absolute;left:416.50px;top:227.91px;line-height:20px;white-space:pre;font-family:'Liberation Sans', sans-serif;font-size:11.8px;color:#2a2a2a;transform-origin:0 0;transform:scaleX(1.0347);">failed</span>
<span style="position:absolute;left:790.50px;top:218.21px;line-height:20px;white-space:pre;font-family:'Liberation Sans', sans-serif;font-size:11.8px;color:#2a2a2a;transform-origin:0 0;transform:scaleX(1.0231);">admin</span>
</div>
<div style="position:absolute;left:966px;top:230px;width:929px;height:238px;overflow:hidden">
<span style="position:absolute;left:40.10px;top:16.71px;line-height:20px;white-space:pre;font-family:'Liberation Sans', sans-serif;font-size:11.8px;color:#2a2a2a;transform-origin:0 0;transform:scaleX(0.9958);">12.1.1.1</span>
<span style="position:absolute;left:185.20px;top:15.18px;line-height:20px;white-space:pre;font-family:'Liberation Sans', sans-serif;font-size:11.6px;color:#2a2a2a;transform-origin:0 0;transform:scaleX(0.9899);">FAILURE</span>
<span style="position:absolute;left:276.60px;top:6.91px;line-height:20px;white-space:pre;font-family:'Liberation Sans', sans-serif;font-size:11.8px;color:#2a2a2a;transform-origin:0 0;transform:scaleX(1.0090);">Feb 03, 2022 11:03</span>
<span style="position:absolute;left:276.60px;top:24.91px;line-height:20px;white-space:pre;font-family:'Liberation Sans', sans-serif;font-size:11.8px;color:#2a2a2a;transform-origin:0 0;transform:scaleX(1.0908);">AM</span>
<span style="position:absolute;left:417.20px;top:6.91px;line-height:20px;white-space:pre;font-family:'Liberation Sans', sans-serif;font-size:11.8px;color:#2a2a2a;transform-origin:0 0;transform:scaleX(1.0133);">Backup Operation performed during backup schedule execution</span>
<span style="position:absolute;left:417.20px;top:24.91px;line-height:20px;white-space:pre;font-family:'Liberation Sans', sans-serif;font-size:11.8px;color:#2a2a2a;transform-origin:0 0;transform:scaleX(1.0347);">failed</span>
<span style="position:absolute;left:791.70px;top:16.21px;line-height:20px;white-space:pre;font-family:'Liberation Sans', sans-serif;font-size:11.8px;color:#2a2a2a;transform-origin:0 0;transform:scaleX(1.0231);">admin</span>
<span style="position:absolute;left:42.00px;top:65.83px;line-height:20px;white-space:pre;font-family:'Liberation Sans', sans-serif;font-size:11.8px;color:#2a2a2a;transform-origin:0 0;transform:scaleX(0.9972);">27.1.1.20</span>
<span style="position:absolute;left:185.20px;top:65.90px;line-height:20px;white-space:pre;font-family:'Liberation Sans', sans-serif;font-size:11.6px;color:#2a2a2a;transform-origin:0 0;transform:scaleX(0.9899);">FAILURE</span>
<span style="position:absolute;left:276.60px;top:56.91px;line-height:20px;white-space:pre;font-family:'Liberation Sans', sans-serif;font-size:11.8px;color:#2a2a2a;transform-origin:0 0;transform:scaleX(1.0190);">Feb 03, 2022 11:02</span>
<span style="position:absolute;left:276.60px;top:75.91px;line-height:20px;white-space:pre;font-family:'Liberation Sans', sans-serif;font-size:11.8px;color:#2a2a2a;transform-origin:0 0;transform:scaleX(1.0908);">AM</span>
<span style="position:absolute;left:417.20px;top:56.91px;line-height:20px;white-space:pre;font-family:'Liberation Sans', sans-serif;font-size:11.8px;color:#2a2a2a;transform-origin:0 0;transform:scaleX(1.0133);">Backup Operation performed during backup schedule execution</span>
<span style="position:absolute;left:417.20px;top:75.91px;line-height:20px;white-space:pre;font-family:'Liberation Sans', sans-serif;font-size:11.8px;color:#2a2a2a;transform-origin:0 0;transform:scaleX(1.0347);">failed</span>
<span style="position:absolute;left:791.70px;top:66.21px;line-height:20px;white-space:pre;font-family:'Liberation Sans', sans-serif;font-size:11.8px;color:#2a2a2a;transform-origin:0 0;transform:scaleX(1.0231);">admin</span>
<span style="position:absolute;left:42.00px;top:116.55px;line-height:20px;white-space:pre;font-family:'Liberation Sans', sans-serif;font-size:11.8px;color:#2a2a2a;transform-origin:0 0;transform:scaleX(0.9972);">27.1.1.14</span>
<span style="position:absolute;left:185.20px;top:116.62px;line-height:20px;white-space:pre;font-family:'Liberation Sans', sans-serif;font-size:11.6px;color:#2a2a2a;transform-origin:0 0;transform:scaleX(0.9899);">FAILURE</span>
<span style="position:absolute;left:276.60px;top:107.91px;line-height:20px;white-space:pre;font-family:'Liberation Sans', sans-serif;font-size:11.8px;color:#2a2a2a;transform-origin:0 0;transform:scaleX(1.0190);">Feb 03, 2022 11:02</span>
<span style="position:absolute;left:276.60px;top:125.91px;line-height:20px;white-space:pre;font-family:'Liberation Sans', sans-serif;font-size:11.8px;color:#2a2a2a;transform-origin:0 0;transform:scaleX(1.0908);">AM</span>
<span style="position:absolute;left:417.20px;top:107.91px;line-height:20px;white-space:pre;font-family:'Liberation Sans', sans-serif;font-size:11.8px;color:#2a2a2a;transform-origin:0 0;transform:scaleX(1.0133);">Backup Operation performed during backup schedule execution</span>
<span style="position:absolute;left:417.20px;top:125.91px;line-height:20px;white-space:pre;font-family:'Liberation Sans', sans-serif;font-size:11.8px;color:#2a2a2a;transform-origin:0 0;transform:scaleX(1.0347);">failed</span>
<span style="position:absolute;left:791.70px;top:117.21px;line-height:20px;white-space:pre;font-family:'Liberation Sans', sans-serif;font-size:11.8px;color:#2a2a2a;transform-origin:0 0;transform:scaleX(1.0231);">admin</span>
<span style="position:absolute;left:42.00px;top:167.27px;line-height:20px;white-space:pre;font-family:'Liberation Sans', sans-serif;font-size:11.8px;color:#2a2a2a;transform-origin:0 0;transform:scaleX(0.9972);">27.1.1.33</span>
<span style="position:absolute;left:185.20px;top:167.34px;line-height:20px;white-space:pre;font-family:'Liberation Sans', sans-serif;font-size:11.6px;color:#2a2a2a;transform-origin:0 0;transform:scaleX(0.9899);">FAILURE</span>
<span style="position:absolute;left:276.60px;top:158.91px;line-height:20px;white-space:pre;font-family:'Liberation Sans', sans-serif;font-size:11.8px;color:#2a2a2a;transform-origin:0 0;transform:scaleX(1.0190);">Feb 03, 2022 11:02</span>
<span style="position:absolute;left:276.60px;top:176.91px;line-height:20px;white-space:pre;font-family:'Liberation Sans', sans-serif;font-size:11.8px;color:#2a2a2a;transform-origin:0 0;transform:scaleX(1.0908);">AM</span>
<span style="position:absolute;left:417.20px;top:158.91px;line-height:20px;white-space:pre;font-family:'Liberation Sans', sans-serif;font-size:11.8px;color:#2a2a2a;transform-origin:0 0;transform:scaleX(1.0133);">Backup Operation performed during backup schedule execution</span>
<span style="position:absolute;left:417.20px;top:176.91px;line-height:20px;white-space:pre;font-family:'Liberation Sans', sans-serif;font-size:11.8px;color:#2a2a2a;transform-origin:0 0;transform:scaleX(1.0347);">failed</span>
<span style="position:absolute;left:791.70px;top:168.21px;line-height:20px;white-space:pre;font-family:'Liberation Sans', sans-serif;font-size:11.8px;color:#2a2a2a;transform-origin:0 0;transform:scaleX(1.0231);">admin</span>
<span style="position:absolute;left:42.00px;top:217.99px;line-height:20px;white-space:pre;font-family:'Liberation Sans', sans-serif;font-size:11.8px;color:#2a2a2a;transform-origin:0 0;transform:scaleX(0.9972);">27.1.1.28</span>
<span style="position:absolute;left:185.20px;top:218.06px;line-height:20px;white-space:pre;font-family:'Liberation Sans', sans-serif;font-size:11.6px;color:#2a2a2a;transform-origin:0 0;transform:scaleX(0.9899);">FAILURE</span>
<span style="position:absolute;left:276.60px;top:208.91px;line-height:20px;white-space:pre;font-family:'Liberation Sans', sans-serif;font-size:11.8px;color:#2a2a2a;transform-origin:0 0;transform:scaleX(1.0190);">Feb 03, 2022 11:02</span>
<span style="position:absolute;left:276.60px;top:227.91px;line-height:20px;white-space:pre;font-family:'Liberation Sans', sans-serif;font-size:11.8px;color:#2a2a2a;transform-origin:0 0;transform:scaleX(1.0908);">AM</span>
<span style="position:absolute;left:417.20px;top:208.91px;line-height:20px;white-space:pre;font-family:'Liberation Sans', sans-serif;font-size:11.8px;color:#2a2a2a;transform-origin:0 0;transform:scaleX(1.0133);">Backup Operation performed during backup schedule execution</span>
<span style="position:absolute;left:417.20px;top:227.91px;line-height:20px;white-space:pre;font-family:'Liberation Sans', sans-serif;font-size:11.8px;color:#2a2a2a;transform-origin:0 0;transform:scaleX(1.0347);">failed</span>
<span style="position:absolute;left:791.70px;top:218.21px;line-height:20px;white-space:pre;font-family:'Liberation Sans', sans-serif;font-size:11.8px;color:#2a2a2a;transform-origin:0 0;transform:scaleX(1.0231);">admin</span>
</div>
<div style="position:absolute;left:966px;top:621px;width:929px;height:197.4px;overflow:hidden">
<span style="position:absolute;left:40.10px;top:15.11px;line-height:20px;white-space:pre;font-family:'Liberation Sans', sans-serif;font-size:11.8px;color:#2a2a2a;transform-origin:0 0;transform:scaleX(0.9958);">12.1.1.1</span>
<span style="position:absolute;left:184.50px;top:15.18px;line-height:20px;white-space:pre;font-family:'Liberation Sans', sans-serif;font-size:11.6px;color:#2a2a2a;transform-origin:0 0;transform:scaleX(1.0087);">FAILURE</span>
<span style="position:absolute;left:277.00px;top:6.91px;line-height:20px;white-space:pre;font-family:'Liberation Sans', sans-serif;font-size:11.8px;color:#2a2a2a;transform-origin:0 0;transform:scaleX(1.0090);">Feb 03, 2022 11:03</span>
<span style="position:absolute;left:277.00px;top:23.91px;line-height:20px;white-space:pre;font-family:'Liberation Sans', sans-serif;font-size:11.8px;color:#2a2a2a;transform-origin:0 0;transform:scaleX(1.0908);">AM</span>
<span style="position:absolute;left:417.40px;top:6.91px;line-height:20px;white-space:pre;font-family:'Liberation Sans', sans-serif;font-size:11.8px;color:#2a2a2a;transform-origin:0 0;transform:scaleX(1.0133);">Backup Operation performed during backup schedule execution</span>
<span style="position:absolute;left:417.40px;top:23.91px;line-height:20px;white-space:pre;font-family:'Liberation Sans', sans-serif;font-size:11.8px;color:#2a2a2a;transform-origin:0 0;transform:scaleX(1.0347);">failed</span>
<span style="position:absolute;left:793.70px;top:16.21px;line-height:20px;white-space:pre;font-family:'Liberation Sans', sans-serif;font-size:11.8px;color:#2a2a2a;transform-origin:0 0;transform:scaleX(1.0231);">admin</span>
<span style="position:absolute;left:42.00px;top:65.83px;line-height:20px;white-space:pre;font-family:'Liberation Sans', sans-serif;font-size:11.8px;color:#2a2a2a;transform-origin:0 0;transform:scaleX(0.9972);">27.1.1.20</span>
<span style="position:absolute;left:184.50px;top:65.90px;line-height:20px;white-space:pre;font-family:'Liberation Sans', sans-serif;font-size:11.6px;color:#2a2a2a;transform-origin:0 0;transform:scaleX(1.0087);">FAILURE</span>
<span style="position:absolute;left:277.00px;top:56.91px;line-height:20px;white-space:pre;font-family:'Liberation Sans', sans-serif;font-size:11.8px;color:#2a2a2a;transform-origin:0 0;transform:scaleX(1.0190);">Feb 03, 2022 11:02</span>
<span style="position:absolute;left:277.00px;top:74.91px;line-height:20px;white-space:pre;font-family:'Liberation Sans', sans-serif;font-size:11.8px;color:#2a2a2a;transform-origin:0 0;transform:scaleX(1.0908);">AM</span>
<span style="position:absolute;left:417.40px;top:56.91px;line-height:20px;white-space:pre;font-family:'Liberation Sans', sans-serif;font-size:11.8px;color:#2a2a2a;transform-origin:0 0;transform:scaleX(1.0133);">Backup Operation performed during backup schedule execution</span>
<span style="position:absolute;left:417.40px;top:74.91px;line-height:20px;white-space:pre;font-family:'Liberation Sans', sans-serif;font-size:11.8px;color:#2a2a2a;transform-origin:0 0;transform:scaleX(1.0347);">failed</span>
<span style="position:absolute;left:793.70px;top:66.21px;line-height:20px;white-space:pre;font-family:'Liberation Sans', sans-serif;font-size:11.8px;color:#2a2a2a;transform-origin:0 0;transform:scaleX(1.0231);">admin</span>
<span style="position:absolute;left:42.00px;top:116.55px;line-height:20px;white-space:pre;font-family:'Liberation Sans', sans-serif;font-size:11.8px;color:#2a2a2a;transform-origin:0 0;transform:scaleX(0.9972);">27.1.1.28</span>
<span style="position:absolute;left:184.50px;top:116.62px;line-height:20px;white-space:pre;font-family:'Liberation Sans', sans-serif;font-size:11.6px;color:#2a2a2a;transform-origin:0 0;transform:scaleX(1.0087);">FAILURE</span>
<span style="position:absolute;left:277.00px;top:107.91px;line-height:20px;white-space:pre;font-family:'Liberation Sans', sans-serif;font-size:11.8px;color:#2a2a2a;transform-origin:0 0;transform:scaleX(1.0190);">Feb 03, 2022 11:02</span>
<span style="position:absolute;left:277.00px;top:125.91px;line-height:20px;white-space:pre;font-family:'Liberation Sans', sans-serif;font-size:11.8px;color:#2a2a2a;transform-origin:0 0;transform:scaleX(1.0908);">AM</span>
<span style="position:absolute;left:417.40px;top:107.91px;line-height:20px;white-space:pre;font-family:'Liberation Sans', sans-serif;font-size:11.8px;color:#2a2a2a;transform-origin:0 0;transform:scaleX(1.0133);">Backup Operation performed during backup schedule execution</span>
<span style="position:absolute;left:417.40px;top:125.91px;line-height:20px;white-space:pre;font-family:'Liberation Sans', sans-serif;font-size:11.8px;color:#2a2a2a;transform-origin:0 0;transform:scaleX(1.0347);">failed</span>
<span style="position:absolute;left:793.70px;top:117.21px;line-height:20px;white-space:pre;font-family:'Liberation Sans', sans-serif;font-size:11.8px;color:#2a2a2a;transform-origin:0 0;transform:scaleX(1.0231);">admin</span>
<span style="position:absolute;left:42.00px;top:167.27px;line-height:20px;white-space:pre;font-family:'Liberation Sans', sans-serif;font-size:11.8px;color:#2a2a2a;transform-origin:0 0;transform:scaleX(0.9972);">27.1.1.33</span>
<span style="position:absolute;left:184.50px;top:167.34px;line-height:20px;white-space:pre;font-family:'Liberation Sans', sans-serif;font-size:11.6px;color:#2a2a2a;transform-origin:0 0;transform:scaleX(1.0087);">FAILURE</span>
<span style="position:absolute;left:277.00px;top:158.91px;line-height:20px;white-space:pre;font-family:'Liberation Sans', sans-serif;font-size:11.8px;color:#2a2a2a;transform-origin:0 0;transform:scaleX(1.0190);">Feb 03, 2022 11:02</span>
<span style="position:absolute;left:277.00px;top:175.91px;line-height:20px;white-space:pre;font-family:'Liberation Sans', sans-serif;font-size:11.8px;color:#2a2a2a;transform-origin:0 0;transform:scaleX(1.0908);">AM</span>
<span style="position:absolute;left:417.40px;top:158.91px;line-height:20px;white-space:pre;font-family:'Liberation Sans', sans-serif;font-size:11.8px;color:#2a2a2a;transform-origin:0 0;transform:scaleX(1.0133);">Backup Operation performed during backup schedule execution</span>
<span style="position:absolute;left:417.40px;top:175.91px;line-height:20px;white-space:pre;font-family:'Liberation Sans', sans-serif;font-size:11.8px;color:#2a2a2a;transform-origin:0 0;transform:scaleX(1.0347);">failed</span>
<span style="position:absolute;left:793.70px;top:168.21px;line-height:20px;white-space:pre;font-family:'Liberation Sans', sans-serif;font-size:11.8px;color:#2a2a2a;transform-origin:0 0;transform:scaleX(1.0231);">admin</span>
</div>
<div style="position:absolute;left:150px;top:760px;width:350px;height:58.5px;overflow:hidden">
<span style="position:absolute;left:44.00px;top:19.01px;line-height:20px;white-space:pre;font-family:'Liberation Sans', sans-serif;font-size:11.8px;color:#555;transform-origin:0 0;transform:scaleX(0.9466);">BackUp Success</span>
<span style="position:absolute;left:212.10px;top:19.01px;line-height:20px;white-space:pre;font-family:'Liberation Sans', sans-serif;font-size:11.8px;color:#555;transform-origin:0 0;transform:scaleX(0.9965);">BackUp Failure</span>
<span style="position:absolute;left:44.00px;top:40.61px;line-height:20px;white-space:pre;font-family:'Liberation Sans', sans-serif;font-size:11.8px;color:#555;transform-origin:0 0;transform:scaleX(0.9877);">Not Backed Up</span>
</div>
</div></body></html>
